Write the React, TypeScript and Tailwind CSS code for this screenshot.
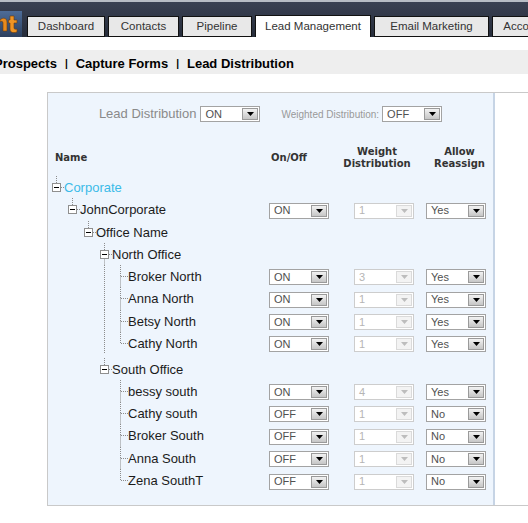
import React from "react";

type Row = {
	name: string;
	depth: number;
	branch?: boolean;
	bottom?: boolean;
	last?: boolean;
	guides?: number[];
	h: number;
	gap?: boolean;
	cyan?: boolean;
	vals?: [string, string, string];
};

const rows: Row[] = [
	{ name: "Corporate", depth: 0, branch: true, h: 22, cyan: true },
	{ name: "JohnCorporate", depth: 1, branch: true, h: 23, vals: ["ON", "1", "Yes"] },
	{ name: "Office Name", depth: 2, branch: true, h: 22 },
	{ name: "North Office", depth: 3, branch: true, bottom: true, h: 22 },
	{ name: "Broker North", depth: 4, guides: [3], h: 22, vals: ["ON", "3", "Yes"] },
	{ name: "Anna North", depth: 4, guides: [3], h: 23, vals: ["ON", "1", "Yes"] },
	{ name: "Betsy North", depth: 4, guides: [3], h: 22, vals: ["ON", "1", "Yes"] },
	{ name: "Cathy North", depth: 4, guides: [3], last: true, h: 22, vals: ["ON", "1", "Yes"] },
	{ name: "South Office", depth: 3, branch: true, h: 22, gap: true },
	{ name: "bessy south", depth: 4, h: 22, vals: ["ON", "4", "Yes"] },
	{ name: "Cathy south", depth: 4, h: 22, vals: ["OFF", "1", "No"] },
	{ name: "Broker South", depth: 4, h: 23, vals: ["OFF", "1", "No"] },
	{ name: "Anna South", depth: 4, h: 22, vals: ["OFF", "1", "No"] },
	{ name: "Zena SouthT", depth: 4, last: true, h: 23, vals: ["OFF", "1", "No"] },
];

const tabs = [
	{ label: "Dashboard", w: "w-[78px]" },
	{ label: "Contacts", w: "w-[71px]" },
	{ label: "Pipeline", w: "w-[70px]" },
	{ label: "Lead Management", w: "w-[116px]", active: true },
	{ label: "Email Marketing", w: "w-[115px]" },
	{ label: "Account", w: "w-[64px]" },
];

const DOT = "#8c8c8c";

function Logo() {
	return (
		<svg width="22" height="26" viewBox="0 0 22 26" className="shrink-0">
			<defs>
				<linearGradient id="lg" x1="0" y1="0" x2="0" y2="1">
					<stop offset="0" stopColor="#4d6c98" />
					<stop offset="1" stopColor="#2c3f5e" />
				</linearGradient>
			</defs>
			<rect x="0" y="0" width="22" height="26" fill="url(#lg)" />
			<path d="M0 9 C3 6 7 7 7 11 V20 H3 V12 C3 10 1 10 0 11 Z" fill="#e98a1c" stroke="#6b3a0a" strokeWidth="0.6" />
			<path d="M10 5 H14 V9 H17 V12 H14 V17 C14 18 15 18.5 17 18 V21 C12 22.5 10 21 10 18 V12 H8.5 V9 H10 Z" fill="#f09524" stroke="#6b3a0a" strokeWidth="0.6" />
		</svg>
	);
}

function Select({ value, disabled }: { value: string; disabled?: boolean }) {
	return (
		<div
			className={`flex h-[16px] w-[60px] shrink-0 items-center justify-between border bg-white ${
				disabled ? "border-[#cdcdcd] text-[#b5b5b5]" : "border-[#a3a3a3] text-[#505050]"
			}`}
		>
			<span className="pl-[4px] text-[11px] leading-none">{value}</span>
			<span
				className={`mr-[1px] flex h-[12px] w-[16px] items-center justify-center border ${
					disabled
						? "border-[#dadada] bg-[#f3f3f3]"
						: "border-[#9a9a9a] bg-linear-to-b from-[#f2f2f2] to-[#c6c6c6]"
				}`}
			>
				<svg width="7" height="4" viewBox="0 0 7 4">
					<path d="M0 0H7L3.5 4Z" fill={disabled ? "#bdbdbd" : "#000"} />
				</svg>
			</span>
		</div>
	);
}

function Connector({ row }: { row: Row }) {
	const h = row.h;
	const mid = Math.floor(h / 2) + 0.5;
	const dash = { stroke: DOT, strokeDasharray: "1 1" };
	const leaf = !row.branch;
	return (
		<svg width="16" height={h} className="shrink-0">
			<line x1="8.5" y1="0" x2="8.5" y2={mid} {...dash} />
			{(row.bottom || (leaf && !row.last)) && <line x1="8.5" y1={mid} x2="8.5" y2={h} {...dash} />}
			{leaf && <line x1="9" y1={mid} x2="16" y2={mid} {...dash} />}
			{row.branch && (
				<>
					<line x1="13" y1={mid} x2="16" y2={mid} {...dash} />
					<rect x="4.5" y={mid - 4} width="8" height="8" fill="#fff" stroke="#8f8f8f" />
					<line x1="6" y1={mid} x2="11" y2={mid} stroke="#000" />
				</>
			)}
		</svg>
	);
}

function Guide({ h }: { h: number }) {
	return (
		<svg width="16" height={h} className="shrink-0">
			<line x1="8.5" y1="0" x2="8.5" y2={h} stroke={DOT} strokeDasharray="1 1" />
		</svg>
	);
}

function TreeRow({ row }: { row: Row }) {
	return (
		<div className={`flex items-center ${row.h === 23 ? "h-[23px]" : "h-[22px]"} ${row.gap ? "mt-[4px]" : ""}`}>
			<div className="flex h-full w-[221px] shrink-0 items-center">
				{Array.from({ length: row.depth }).map((_, i) =>
					row.guides?.includes(i) ? <Guide key={i} h={row.h} /> : <div key={i} className="w-[16px] shrink-0" />
				)}
				<Connector row={row} />
				<span className={`text-[13px] leading-none ${row.cyan ? "text-[#3bbbe8]" : "text-[#1b1b1b]"}`}>
					{row.name}
				</span>
			</div>
			{row.vals && (
				<div className="mt-[2px] flex items-center">
					<Select value={row.vals[0]} />
					<div className="ml-[25px]">
						<Select value={row.vals[1]} disabled />
					</div>
					<div className="ml-[12px]">
						<Select value={row.vals[2]} />
					</div>
				</div>
			)}
		</div>
	);
}

export default function App() {
	return (
		<div className="h-[523px] w-[528px] overflow-hidden bg-white font-['Liberation_Sans',Arial,sans-serif]">
			{/* top bar */}
			<div className="flex h-[37px] items-end border-t-2 border-[#b7bcc5] bg-linear-to-b from-[#3a4153] to-[#262c3a]">
				<Logo />
				<div className="ml-[5px] flex items-end gap-[3px]">
					{tabs.map((t) => (
						<div
							key={t.label}
							className={`flex shrink-0 items-center justify-center whitespace-nowrap text-[11.5px] text-[#333] ${t.w} ${
								t.active
									? "h-[22px] border-x border-t border-[#111] bg-white"
									: "h-[21px] border border-[#111] bg-[#e8e8e8]"
							}`}
						>
							{t.label}
						</div>
					))}
				</div>
			</div>

			{/* sub navigation */}
			<div className="mt-[13px] flex h-[24px] items-center whitespace-nowrap bg-[#eeeeee] pt-[3px] text-[13px] font-bold text-black">
				<span className="ml-[-6px]">Prospects</span>
				<span className="mx-[8px] text-[10px]">|</span>
				<span>Capture Forms</span>
				<span className="mx-[8px] text-[10px]">|</span>
				<span>Lead Distribution</span>
			</div>

			{/* lead distribution panel */}
			<div className="ml-[47px] mt-[18px] flex w-[481px] border-y border-[#c9c9c9]">
				<div className="w-[448px] shrink-0 border-l border-r-2 border-l-[#c9c9c9] border-r-[#c6d4e5] bg-[#eef5fd] pb-[13px]">
					<div className="mt-[11px] flex h-[20px] items-center justify-center">
						<span className="text-[13px] text-[#8a8a8a]">Lead Distribution</span>
						<div className="ml-[4px]">
							<Select value="ON" />
						</div>
						<span className="ml-[21px] text-[10px] text-[#999]">Weighted Distribution:</span>
						<div className="ml-[3px]">
							<Select value="OFF" />
						</div>
					</div>

					<div className="mt-[22px] flex h-[24px] items-center font-['DejaVu_Sans',Verdana,sans-serif] text-[10px] font-bold leading-[12px] text-[#333]">
						<div className="w-[221px] shrink-0 pl-[7px]">Name</div>
						<div className="w-[40px] shrink-0 text-center">On/Off</div>
						<div className="ml-[26px] w-[84px] shrink-0 text-center">
							Weight
							<br />
							Distribution
						</div>
						<div className="ml-[10px] w-[61px] shrink-0 text-center">
							Allow
							<br />
							Reassign
						</div>
					</div>

					<div className="mt-[6px]">
						{rows.map((r) => (
							<TreeRow key={r.name} row={r} />
						))}
					</div>
				</div>
				<div className="flex-1 bg-white" />
			</div>
		</div>
	);
}
